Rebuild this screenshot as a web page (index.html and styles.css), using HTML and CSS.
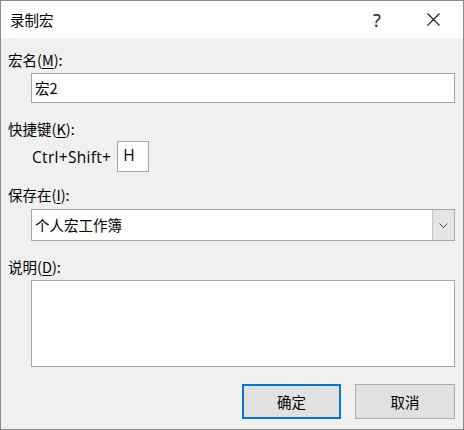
FILE: index.html
```html
<!DOCTYPE html>
<html lang="zh-CN">
<head>
<meta charset="utf-8">
<title>录制宏</title>
<link rel="stylesheet" href="styles.css">
</head>
<body>
<div class="window">
  <div class="titlebar">
    <span class="title">录制宏</span>
    <span class="help">?</span>
    <span class="close">
      <svg width="13" height="13" viewBox="0 0 13 13"><path d="M0.5 0.5 L12.5 12.5 M12.5 0.5 L0.5 12.5" stroke="#1a1a1a" stroke-width="1.1" fill="none"/></svg>
    </span>
  </div>
  <div class="content">
    <div class="label l1">宏名(<u>M</u>):</div>
    <div class="field input">宏2</div>
    <div class="label l2">快捷键(<u>K</u>):</div>
    <div class="shortcut">
      <span class="prefix">Ctrl+Shift+</span>
      <span class="keybox">H</span>
    </div>
    <div class="label l3">保存在(<u>I</u>):</div>
    <div class="field select">
      <span class="sel-text">个人宏工作簿</span>
      <span class="drop">
        <svg width="9" height="5" viewBox="0 0 9 5"><path d="M0.5 0.5 L4.5 4.5 L8.5 0.5" stroke="#444" stroke-width="1" fill="none"/></svg>
      </span>
    </div>
    <div class="label l4">说明(<u>D</u>):</div>
    <div class="field textarea"></div>
    <div class="buttons">
      <button class="btn ok">确定</button>
      <button class="btn cancel">取消</button>
    </div>
  </div>
</div>
</body>
</html>
```
FILE: styles.css
```css
* { box-sizing: border-box; }
html, body { margin: 0; padding: 0; }
body {
  width: 464px;
  height: 430px;
  font-family: "Open Sans", "Noto Sans CJK SC", sans-serif;
  font-size: 15px;
  color: #000;
  background: #f0f0f0;
}
.window {
  width: 464px;
  height: 430px;
  border: 1px solid #8a8a8a;
  background: #f0f0f0;
  display: flex;
  flex-direction: column;
}
.titlebar {
  height: 37px;
  background: #fff;
  display: flex;
  align-items: center;
  padding-left: 9px;
  flex-shrink: 0;
}
.title {
  flex: 1;
  font-family: "Noto Sans CJK SC", sans-serif;
  font-size: 14.5px;
  line-height: 20px;
}
.help {
  width: 14px;
  font-family: "Noto Sans", "DejaVu Sans", sans-serif;
  font-size: 18px;
  line-height: 20px;
  color: #222;
  margin-right: 43px;
  text-align: center;
}
.close {
  width: 13px;
  height: 13px;
  margin-right: 23px;
  display: flex;
}
.content {
  padding: 12px 8px 0 7px;
  display: flex;
  flex-direction: column;
}
.label {
  line-height: 20px;
  height: 20px;
  font-family: "Noto Sans CJK SC", sans-serif;
  font-size: 14.5px;
}
.label u { text-underline-offset: 2px; }
.l2, .l4 { margin-top: 16px; }
.l3 { margin-top: 13px; }
.field {
  margin-left: 23px;
  background: #fff;
  border: 1px solid #a6a6a6;
}
.input {
  margin-top: 3px;
  height: 30px;
  line-height: 28px;
  padding-left: 3px;
  font-family: "Noto Sans CJK SC", sans-serif;
  font-size: 14.5px;
}
.shortcut {
  margin-top: 2px;
  margin-left: 24px;
  display: flex;
  align-items: center;
  height: 31px;
}
.prefix {
  font-size: 15.5px;
  margin-right: 6px;
  letter-spacing: 0.3px;
}
.keybox {
  width: 32px;
  height: 31px;
  background: #fff;
  border: 1px solid #a6a6a6;
  padding-left: 5px;
  line-height: 26px;
  font-size: 15.5px;
}
.select {
  margin-top: 4px;
  height: 32px;
  display: flex;
  align-items: stretch;
}
.sel-text {
  flex: 1;
  line-height: 30px;
  padding-left: 3px;
  font-family: "Noto Sans CJK SC", sans-serif;
  font-size: 14.5px;
}
.drop {
  width: 22px;
  background: #e5e5e5;
  border-left: 1px solid #c4c4c4;
  display: flex;
  align-items: center;
  justify-content: center;
  padding-top: 1px;
}
.textarea {
  margin-top: 3px;
  height: 87px;
}
.buttons {
  margin-top: 17px;
  display: flex;
  justify-content: flex-end;
  gap: 14px;
}
.btn {
  height: 35px;
  background: #e1e1e1;
  border: 1px solid #adadad;
  font-family: "Noto Sans CJK SC", sans-serif;
  font-size: 14.5px;
  color: #000;
  padding: 0;
  margin: 0;
}
.ok {
  width: 99px;
  border: 2px solid #0078d7;
}
.cancel {
  width: 100px;
}
```
